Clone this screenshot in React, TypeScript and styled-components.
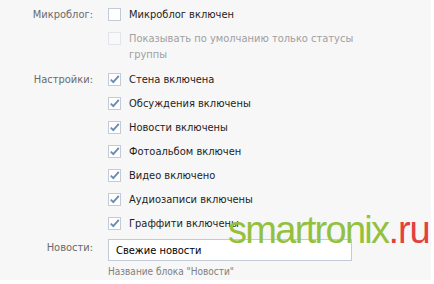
import styled, {createGlobalStyle} from "styled-components";

const GlobalStyle = createGlobalStyle`
  html, body {
    margin: 0;
    padding: 0;
    background: #ffffff;
  }
`

type Option = {
    text: string
    checked: boolean
    disabled?: boolean
}

const microblogOptions: Option[] = [
    {text: "Микроблог включен", checked: false},
    {text: "Показывать по умолчанию только статусы группы", checked: false, disabled: true},
]

const settingsOptions: Option[] = [
    {text: "Стена включена", checked: true},
    {text: "Обсуждения включены", checked: true},
    {text: "Новости включены", checked: true},
    {text: "Фотоальбом включен", checked: true},
    {text: "Видео включено", checked: true},
    {text: "Аудиозаписи включены", checked: true},
    {text: "Граффити включены", checked: true},
]

function CheckBox(props: { checked: boolean, disabled?: boolean }) {
    return (
        <StyledBox $disabled={props.disabled}>
            {props.checked && (
                <svg width="11" height="11" viewBox="0 0 11 11">
                    <path d="M1.8 5.6 L4.3 8.2 L9.8 1.8" fill="none" stroke="#6a8cb3" strokeWidth="1.9"/>
                </svg>
            )}
        </StyledBox>
    )
}

function OptionList(props: { options: Option[] }) {
    return (
        <StyledOptionList>
            {props.options.map(option => (
                <StyledOption key={option.text} $disabled={option.disabled}>
                    <CheckBox checked={option.checked} disabled={option.disabled}/>
                    <StyledOptionText>{option.text}</StyledOptionText>
                </StyledOption>
            ))}
        </StyledOptionList>
    )
}

export default function App() {
    return (
        <>
            <GlobalStyle/>
            <StyledPage>
                <StyledRow>
                    <StyledLabel>Микроблог:</StyledLabel>
                    <OptionList options={microblogOptions}/>
                </StyledRow>
                <StyledRow>
                    <StyledLabel>Настройки:</StyledLabel>
                    <OptionList options={settingsOptions}/>
                </StyledRow>
                <StyledRow>
                    <StyledLabel $input>Новости:</StyledLabel>
                    <div>
                        <StyledInput type={"text"} defaultValue={"Свежие новости"}/>
                        <StyledHint>Название блока "Новости"</StyledHint>
                    </div>
                </StyledRow>
                <StyledWatermark>smartronix<StyledWatermarkRed>.ru</StyledWatermarkRed></StyledWatermark>
            </StyledPage>
        </>
    )
}

const StyledPage = styled.div`
  position: relative;
  width: 431px;
  height: 280px;
  box-sizing: border-box;
  padding-top: 3px;
  background: #f7f7f7;
  font-family: "DejaVu Sans Condensed", "DejaVu Sans", Tahoma, sans-serif;
  font-size: 11px;
  line-height: 16px;
  color: #1e1e1e;
`

const StyledRow = styled.div`
  display: grid;
  grid-template-columns: 93px 1fr;
  column-gap: 15px;
  margin-bottom: 1px;
`

const StyledLabel = styled.div<{ $input?: boolean }>`
  text-align: right;
  color: #6a6a6a;
  padding-top: ${props => props.$input ? "3px" : "4px"};
`

const StyledOptionList = styled.div`
  display: flex;
  flex-direction: column;
`

const StyledOption = styled.div<{ $disabled?: boolean }>`
  display: flex;
  align-items: flex-start;
  gap: 8px;
  padding: 4px 0;
  color: ${props => props.$disabled ? "#a0a0a0" : "#1e1e1e"};
`

const StyledOptionText = styled.span`
  max-width: 228px;
`

const StyledBox = styled.span<{ $disabled?: boolean }>`
  flex: none;
  width: 13px;
  height: 13px;
  margin-top: 1px;
  box-sizing: border-box;
  border: 1px solid ${props => props.$disabled ? "#e2e6ea" : "#c3ccd6"};
  background: ${props => props.$disabled ? "#f9f9f9" : "#fff"};
  display: flex;
  align-items: center;
  justify-content: center;
`

const StyledInput = styled.input`
  display: block;
  width: 244px;
  height: 22px;
  box-sizing: border-box;
  margin: 2px 0 0;
  padding: 0 7px;
  border: 1px solid #c3ccd6;
  background: #fff;
  font-family: "DejaVu Sans Condensed", "DejaVu Sans", Tahoma, sans-serif;
  font-size: 11px;
  color: #000;
  outline: none;
`

const StyledHint = styled.div`
  margin-top: 3px;
  font-size: 10px;
  color: #808080;
`

const StyledWatermark = styled.div`
  position: absolute;
  left: 228px;
  top: 208px;
  font-family: "Liberation Sans", Arial, sans-serif;
  font-size: 38px;
  line-height: 44px;
  letter-spacing: -1.7px;
  color: #93c13e;
`

const StyledWatermarkRed = styled.span`
  letter-spacing: -1px;
  color: #e2413f;
`
